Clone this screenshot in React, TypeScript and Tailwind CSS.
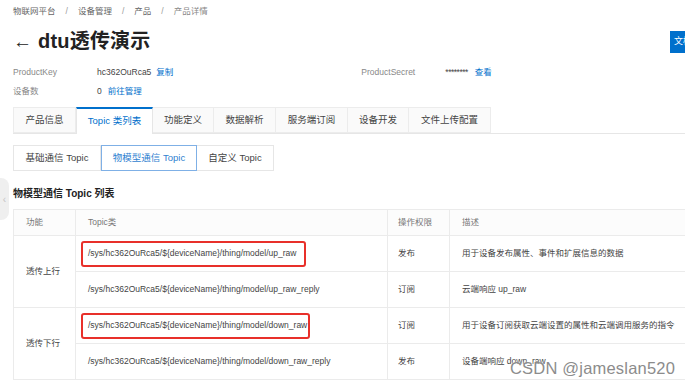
import React from "react";

const font = { fontFamily: '"Liberation Sans", "Noto Sans CJK SC", sans-serif' };

function Tab({ label, w, active }: { label: string; w: number; active?: boolean }) {
  return (
    <div
      style={{ width: w }}
      className={
        active
          ? "h-[27px] flex items-center justify-center text-[9.5px] text-[#0070cc] bg-white border-t-2 border-t-[#0070cc] border-x border-x-[#e6e6e6] -mb-px relative z-10"
          : "h-[26px] flex items-center justify-center text-[9.5px] text-[#444] bg-[#fafafa] border border-[#ececec] border-l-0"
      }
    >
      {label}
    </div>
  );
}

function SubTab({ label, w, active }: { label: string; w: number; active?: boolean }) {
  return (
    <div
      style={{ width: w }}
      className={
        active
          ? "h-[26px] flex items-center justify-center text-[9.5px] text-[#2f7fd0] border border-[#7fb0e6] bg-white relative z-10"
          : "h-[26px] flex items-center justify-center text-[9.5px] text-[#444] border border-[#e6e6e6] -ml-px first:ml-0"
      }
    >
      {label}
    </div>
  );
}

export default function App() {
  const td = "border border-[#ebebeb] text-[8.5px] text-[#444]";
  return (
    <div className="w-[685px] h-[386px] overflow-hidden relative bg-white" style={font}>
      {/* left collapse handle */}
      <div className="absolute left-0 top-[178px] w-[9px] h-[42px] bg-[#efefef] rounded-r-[8px] flex items-center justify-center text-[10px] text-[#c4c4c4] z-20">
        ‹
      </div>
      <div className="w-[780px] pl-[13px]">
        {/* breadcrumb */}
        <div className="h-[19px] pt-[3px] flex items-center gap-[10px] text-[8.5px] text-[#666]">
          <span>物联网平台</span>
          <span className="text-[#999]">/</span>
          <span>设备管理</span>
          <span className="text-[#999]">/</span>
          <span>产品</span>
          <span className="text-[#999]">/</span>
          <span className="text-[#888]">产品详情</span>
        </div>
        {/* title */}
        <div className="w-[717px] h-[44px] flex items-center justify-between">
          <div className="flex items-center text-[#222]">
            <span className="text-[19px] w-[25px] leading-none">←</span>
            <span className="text-[20px] font-bold tracking-[0.2px]">dtu透传演示</span>
          </div>
          <div className="w-[60px] h-[22px] bg-[#0070cc] text-white text-[9px] flex items-center pl-[4px] mt-[2px]">
            文档
          </div>
        </div>
        {/* meta */}
        <div className="flex items-center h-[19px] text-[8.5px]">
          <span className="w-[84px] text-[#888]">ProductKey</span>
          <span className="text-[#444]">hc362OuRca5</span>
          <span className="ml-[5px] text-[#0070cc]">复制</span>
          <span className="ml-[188px] w-[84px] text-[#888]">ProductSecret</span>
          <span className="text-[#444] tracking-[-0.5px]">********</span>
          <span className="ml-[7px] text-[#0070cc]">查看</span>
        </div>
        <div className="flex items-center h-[19px] text-[8.5px]">
          <span className="w-[84px] text-[#888]">设备数</span>
          <span className="text-[#444]">0</span>
          <span className="ml-[6px] text-[#0070cc]">前往管理</span>
        </div>
        {/* tabs */}
        <div className="mt-[6px] flex items-end border-b border-[#e6e6e6]">
          <div className="border-l border-[#ececec] flex items-end">
            <Tab label="产品信息" w={62} />
          </div>
          <Tab label="Topic 类列表" w={77} active />
          <Tab label="功能定义" w={61} />
          <Tab label="数据解析" w={62} />
          <Tab label="服务端订阅" w={72} />
          <Tab label="设备开发" w={61} />
          <Tab label="文件上传配置" w={82} />
        </div>
        {/* sub tabs */}
        <div className="mt-[11px] flex">
          <SubTab label="基础通信 Topic" w={88} />
          <SubTab label="物模型通信 Topic" w={96} active />
          <SubTab label="自定义 Topic" w={78} />
        </div>
        {/* heading */}
        <div className="mt-[15px] h-[14px] flex items-center text-[10px] font-bold text-[#222]">
          物模型通信 Topic 列表
        </div>
        {/* table */}
        <table className="mt-[9px] border-collapse w-[760px] table-fixed">
          <colgroup>
            <col style={{ width: 62 }} />
            <col style={{ width: 312 }} />
            <col style={{ width: 62 }} />
            <col />
          </colgroup>
          <thead>
            <tr className="h-[26px] bg-[#fcfcfc]">
              <th className={`${td} font-normal text-left pl-[12px] text-[#777]`}>功能</th>
              <th className={`${td} font-normal text-left pl-[12px] text-[#777]`}>Topic类</th>
              <th className={`${td} font-normal text-left pl-[10px] text-[#777]`}>操作权限</th>
              <th className={`${td} font-normal text-left pl-[12px] text-[#777]`}>描述</th>
            </tr>
          </thead>
          <tbody>
            <tr className="h-[36px]">
              <td rowSpan={2} className={`${td} pl-[12px]`}>透传上行</td>
              <td className={td}>
                <div className="ml-[5px] w-[225px] h-[26px] border-2 border-[#e8302a] rounded-[3px] flex items-center pl-[5px]">
                  /sys/hc362OuRca5/${"{"}deviceName{"}"}/thing/model/up_raw
                </div>
              </td>
              <td className={`${td} pl-[10px]`}>发布</td>
              <td className={`${td} pl-[12px]`}>用于设备发布属性、事件和扩展信息的数据</td>
            </tr>
            <tr className="h-[36px]">
              <td className={`${td} pl-[12px]`}>/sys/hc362OuRca5/${"{"}deviceName{"}"}/thing/model/up_raw_reply</td>
              <td className={`${td} pl-[10px]`}>订阅</td>
              <td className={`${td} pl-[12px]`}>云端响应 up_raw</td>
            </tr>
            <tr className="h-[36px]">
              <td rowSpan={2} className={`${td} pl-[12px]`}>透传下行</td>
              <td className={td}>
                <div className="ml-[5px] w-[229px] h-[26px] border-2 border-[#e8302a] rounded-[3px] flex items-center pl-[5px]">
                  /sys/hc362OuRca5/${"{"}deviceName{"}"}/thing/model/down_raw
                </div>
              </td>
              <td className={`${td} pl-[10px]`}>订阅</td>
              <td className={`${td} pl-[12px]`}>用于设备订阅获取云端设置的属性和云端调用服务的指令</td>
            </tr>
            <tr className="h-[36px]">
              <td className={`${td} pl-[12px]`}>/sys/hc362OuRca5/${"{"}deviceName{"}"}/thing/model/down_raw_reply</td>
              <td className={`${td} pl-[10px]`}>发布</td>
              <td className={`${td} pl-[12px]`}>设备端响应 down_raw</td>
            </tr>
          </tbody>
        </table>
      </div>
      {/* watermark */}
      <div className="absolute left-[510px] top-[356px] text-[16.5px] text-[#8c8c8c] tracking-[0.2px]" style={{ fontFamily: '"Liberation Sans", sans-serif', textShadow: "0 0 2px #fff" }}>
        CSDN @jameslan520
      </div>
    </div>
  );
}
